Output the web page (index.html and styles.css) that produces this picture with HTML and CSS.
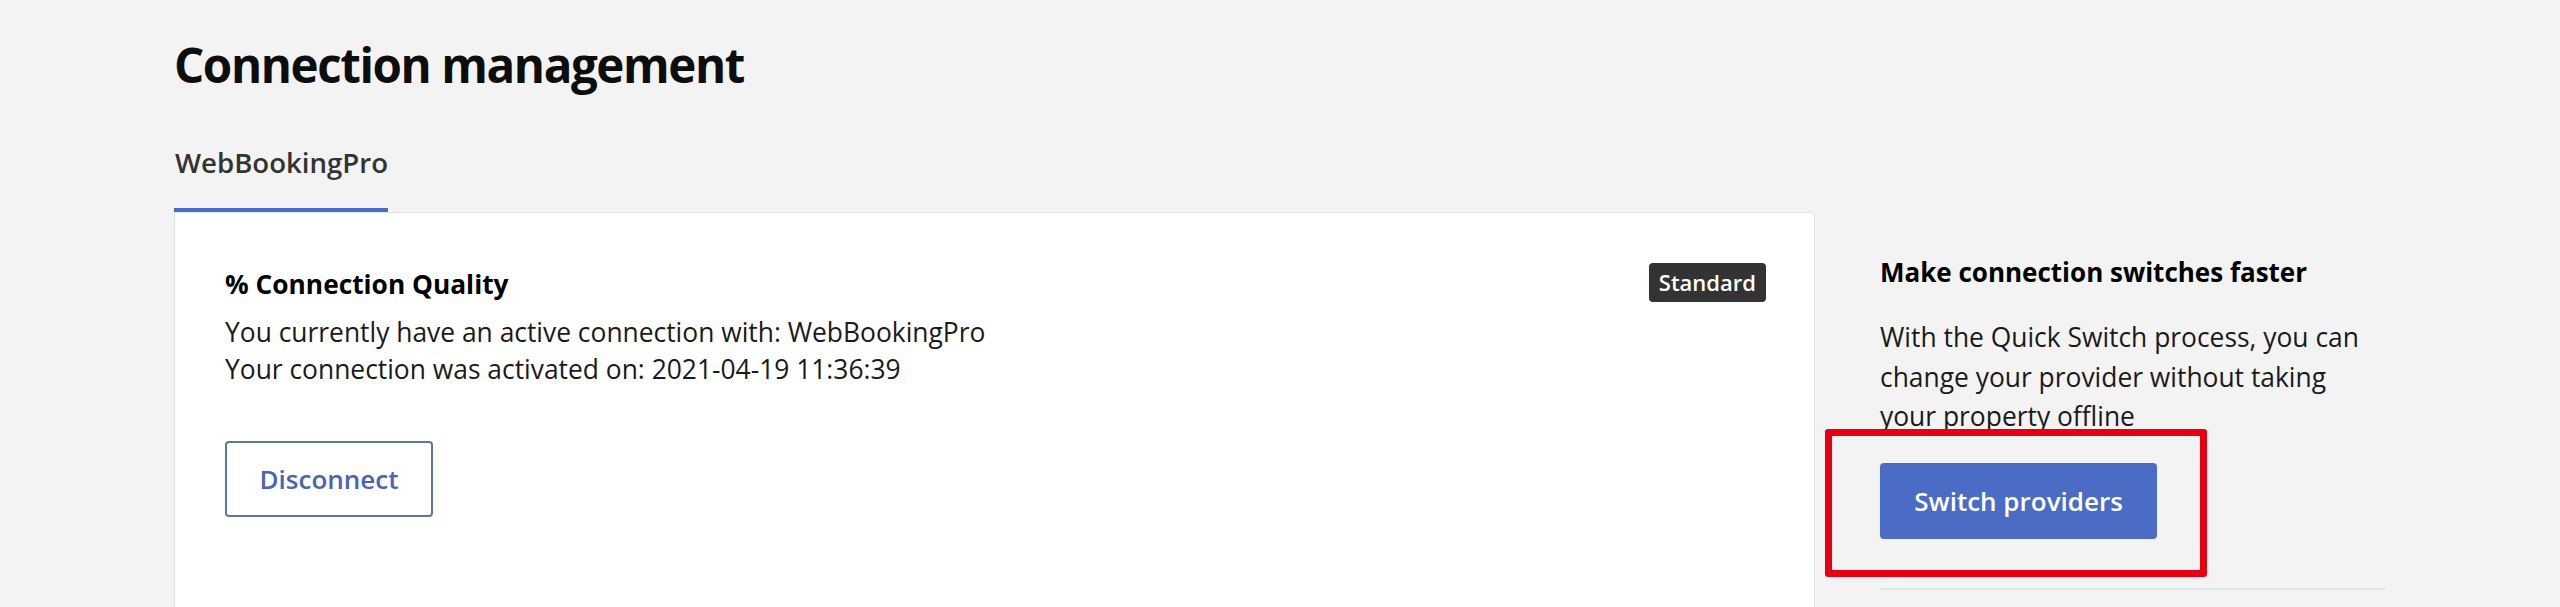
FILE: index.html
```html
<!DOCTYPE html>
<html lang="en">
<head>
<meta charset="utf-8">
<title>Connection management</title>
<link rel="stylesheet" href="styles.css">
</head>
<body>
<main class="page">
  <h1 class="page-title">Connection management</h1>
  <nav class="tabs">
    <span class="tab tab-active">WebBookingPro</span>
  </nav>
  <div class="layout">
    <section class="card">
      <div class="card-header">
        <h2 class="card-title">% Connection Quality</h2>
        <span class="badge">Standard</span>
      </div>
      <p class="card-text">You currently have an active connection with: WebBookingPro<br>Your connection was activated on: 2021-04-19 11:36:39</p>
      <button class="btn-outline" type="button">Disconnect</button>
    </section>
    <aside class="aside">
      <h2 class="aside-title">Make connection switches faster</h2>
      <p class="aside-text">With the Quick Switch process, you can change your provider without taking your property offline</p>
      <div class="aside-action">
        <button class="btn-primary" type="button">Switch providers</button>
        <span class="highlight"></span>
      </div>
      <hr class="divider">
    </aside>
  </div>
</main>
</body>
</html>
```

FILE: styles.css
```css
html, body {
  margin: 0;
  padding: 0;
  height: 100%;
  overflow: hidden;
}
body {
  background: #f3f3f3;
  font-family: "Open Sans", "Noto Sans", sans-serif;
  color: #1a1a1a;
}
.page {
  padding: 35px 0 0 174px;
}
.page-title {
  margin: 0;
  font-size: 47.5px;
  line-height: 60px;
  font-weight: 700;
  color: #0d0d0d;
  letter-spacing: -1.4px;
}
.tabs {
  display: flex;
  margin-top: 52px;
}
.tab {
  font-size: 27.6px;
  line-height: 30px;
  font-weight: 600;
  color: #333;
  padding: 0 0 31px 1px;
}
.tab-active {
  border-bottom: 4px solid #4b6cc0;
}
.layout {
  display: flex;
  align-items: flex-start;
}
.card {
  box-sizing: border-box;
  width: 1641px;
  min-height: 460px;
  background: #fff;
  border: 1px solid #e2e2e2;
  border-radius: 0 4px 4px 4px;
  padding: 50px 48px 40px 50px;
}
.card-header {
  display: flex;
  justify-content: space-between;
  align-items: flex-start;
}
.card-title {
  margin: 5px 0 0;
  font-size: 26.3px;
  line-height: 32px;
  font-weight: 700;
  color: #000;
}
.badge {
  display: inline-block;
  background: #333;
  color: #fff;
  font-size: 22px;
  font-weight: 600;
  line-height: 39px;
  height: 39px;
  padding: 0 10px;
  border-radius: 4px;
}
.card-text {
  margin: 12px 0 0;
  font-size: 26.4px;
  line-height: 37px;
  color: #1a1a1a;
}
.btn-outline {
  display: block;
  margin-top: 53px;
  box-sizing: border-box;
  width: 208px;
  height: 76px;
  background: #fff;
  border: 2px solid #5d73a3;
  border-radius: 4px;
  color: #4a64b6;
  font-family: inherit;
  font-size: 26px;
  font-weight: 600;
  cursor: pointer;
}
.aside {
  box-sizing: border-box;
  width: 505px;
  margin-left: 65px;
  padding-top: 44px;
}
.aside-title {
  margin: 0;
  font-size: 26px;
  line-height: 32px;
  font-weight: 700;
  color: #000;
}
.aside-text {
  margin: 30px 0 0;
  font-size: 26.4px;
  line-height: 39.5px;
  color: #1a1a1a;
}
.aside-action {
  position: relative;
  margin-top: 26px;
}
.btn-primary {
  display: block;
  box-sizing: border-box;
  width: 277px;
  height: 76px;
  border: none;
  border-radius: 4px;
  background: #4a6cc4;
  color: #fff;
  font-family: inherit;
  font-size: 26px;
  font-weight: 600;
  cursor: pointer;
}
.highlight {
  position: absolute;
  box-sizing: border-box;
  left: -55px;
  top: -34px;
  width: 382px;
  height: 148px;
  border: 7px solid #e60012;
  border-radius: 3px;
  pointer-events: none;
}
.divider {
  margin: 49px 0 0;
  border: none;
  height: 2px;
  background: #dfe3ea;
}
```
